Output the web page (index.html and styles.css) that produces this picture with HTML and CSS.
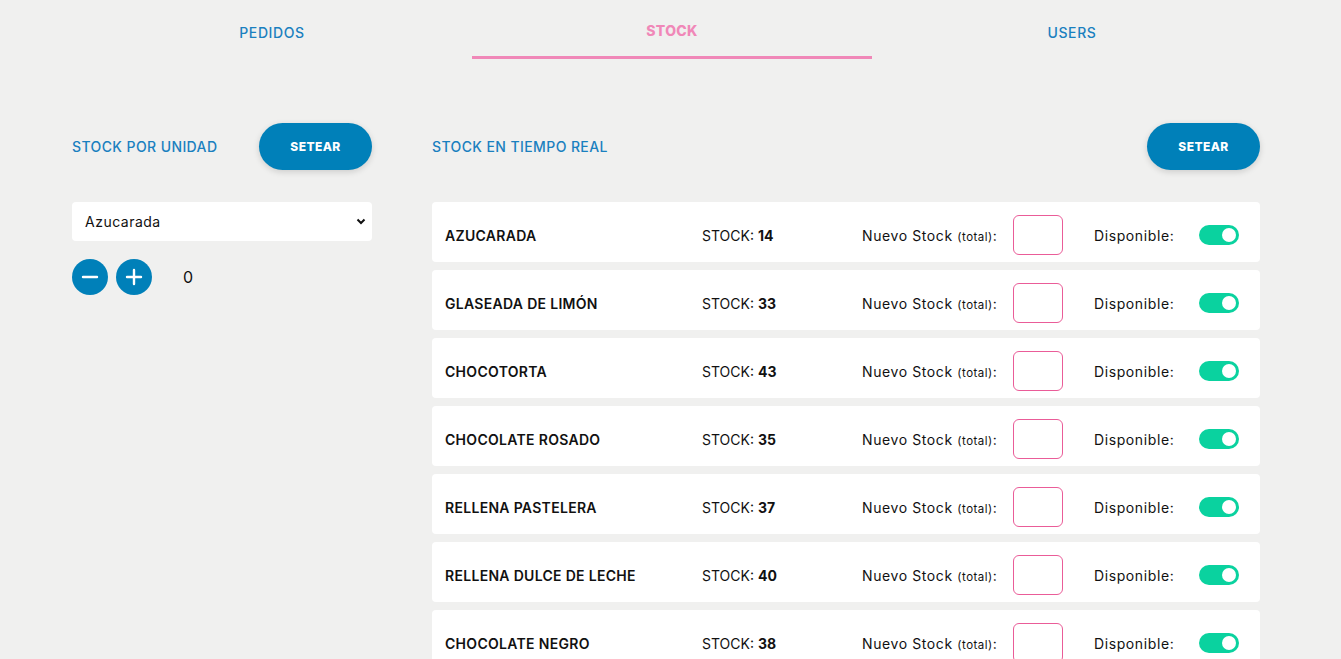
FILE: index.html
```html
<!DOCTYPE html>
<html lang="es">
<head>
<meta charset="utf-8">
<title>Stock</title>
<link rel="stylesheet" href="styles.css">
</head>
<body>
<div class="page">
  <nav class="tabs">
    <a class="tab">PEDIDOS</a>
    <a class="tab active">STOCK</a>
    <a class="tab">USERS</a>
  </nav>

  <div class="content">
    <section class="left">
      <div class="head">
        <h2 class="title">STOCK POR UNIDAD</h2>
        <button class="btn">SETEAR</button>
      </div>
      <div class="select">
        <span>Azucarada</span>
        <svg width="10" height="7" viewBox="0 0 10 7"><path d="M1.5 1.5 L5 5 L8.5 1.5" fill="none" stroke="#111" stroke-width="2"/></svg>
      </div>
      <div class="counter">
        <button class="circle"><svg width="18" height="18" viewBox="0 0 18 18"><path d="M2 9h14" stroke="#fff" stroke-width="2.4" stroke-linecap="round"/></svg></button>
        <button class="circle"><svg width="18" height="18" viewBox="0 0 18 18"><path d="M2 9h14M9 2v14" stroke="#fff" stroke-width="2.4" stroke-linecap="round"/></svg></button>
        <span class="count">0</span>
      </div>
    </section>

    <section class="right">
      <div class="head">
        <h2 class="title">STOCK EN TIEMPO REAL</h2>
        <button class="btn">SETEAR</button>
      </div>
      <div class="list">
        <div class="card"><span class="name">AZUCARADA</span><span class="stock">STOCK: <b>14</b></span><span class="nuevo">Nuevo Stock <small>(total)</small>:</span><span class="input"></span><span class="disp">Disponible:</span><span class="toggle"></span></div>
        <div class="card"><span class="name">GLASEADA DE LIMÓN</span><span class="stock">STOCK: <b>33</b></span><span class="nuevo">Nuevo Stock <small>(total)</small>:</span><span class="input"></span><span class="disp">Disponible:</span><span class="toggle"></span></div>
        <div class="card"><span class="name">CHOCOTORTA</span><span class="stock">STOCK: <b>43</b></span><span class="nuevo">Nuevo Stock <small>(total)</small>:</span><span class="input"></span><span class="disp">Disponible:</span><span class="toggle"></span></div>
        <div class="card"><span class="name">CHOCOLATE ROSADO</span><span class="stock">STOCK: <b>35</b></span><span class="nuevo">Nuevo Stock <small>(total)</small>:</span><span class="input"></span><span class="disp">Disponible:</span><span class="toggle"></span></div>
        <div class="card"><span class="name">RELLENA PASTELERA</span><span class="stock">STOCK: <b>37</b></span><span class="nuevo">Nuevo Stock <small>(total)</small>:</span><span class="input"></span><span class="disp">Disponible:</span><span class="toggle"></span></div>
        <div class="card"><span class="name">RELLENA DULCE DE LECHE</span><span class="stock">STOCK: <b>40</b></span><span class="nuevo">Nuevo Stock <small>(total)</small>:</span><span class="input"></span><span class="disp">Disponible:</span><span class="toggle"></span></div>
        <div class="card"><span class="name">CHOCOLATE NEGRO</span><span class="stock">STOCK: <b>38</b></span><span class="nuevo">Nuevo Stock <small>(total)</small>:</span><span class="input"></span><span class="disp">Disponible:</span><span class="toggle"></span></div>
      </div>
    </section>
  </div>
</div>
</body>
</html>
```
FILE: styles.css
```css
* { box-sizing: border-box; }
html, body { margin: 0; padding: 0; }
body {
  background: #f0f0ef;
  font-family: Inter, "Noto Sans", sans-serif;
  color: #111;
  overflow: hidden;
}
.page {
  padding-left: 72px;
  width: 1341px;
}
.tabs {
  display: grid;
  grid-template-columns: 400px 400px 400px;
  height: 59px;
}
.tab {
  display: flex;
  justify-content: center;
  padding-top: 24px;
  font-size: 14px;
  letter-spacing: 0.6px;
  color: #1a80bf;
  font-weight: 500;
}
.tab.active {
  color: #f088b8;
  font-weight: 800;
  padding-top: 22px;
  letter-spacing: 0.3px;
  border-bottom: 3px solid #f088b8;
}
.content {
  display: flex;
  gap: 60px;
  padding-top: 64px;
  width: 1188px;
}
.left { width: 300px; flex: none; }
.right { flex: 1; }
.head {
  display: flex;
  align-items: center;
  justify-content: space-between;
  height: 47px;
}
.title {
  margin: 0;
  font-size: 14px;
  font-weight: 500;
  letter-spacing: 0.4px;
  color: #1a80bf;
}
.btn {
  width: 113px;
  height: 47px;
  border: none;
  border-radius: 24px;
  background: #0080b9;
  color: #fff;
  font-family: Inter, sans-serif;
  font-weight: 800;
  font-size: 12px;
  letter-spacing: 0.4px;
  box-shadow: 0 2px 6px rgba(0,0,0,0.15);
  padding: 0;
}
.select {
  margin-top: 32px;
  height: 39px;
  background: #fff;
  border-radius: 4px;
  display: flex;
  align-items: center;
  justify-content: space-between;
  padding: 0 6px 0 13px;
  font-size: 14px;
  letter-spacing: 0.5px;
}
.counter {
  margin-top: 18px;
  display: flex;
  align-items: center;
  gap: 8px;
}
.circle {
  width: 36px;
  height: 36px;
  border-radius: 50%;
  border: none;
  background: #0080b9;
  display: flex;
  align-items: center;
  justify-content: center;
  padding: 0;
}
.count {
  margin-left: 23px;
  font-size: 16px;
}
.list {
  margin-top: 32px;
  display: flex;
  flex-direction: column;
  gap: 8px;
}
.card {
  height: 60px;
  background: #fff;
  border-radius: 4px;
  display: flex;
  align-items: center;
  padding: 6px 0 0 13px;
  font-size: 14px;
  letter-spacing: 0.6px;
}
.name { width: 257px; font-weight: 600; letter-spacing: 0.3px; }
.stock { width: 160px; letter-spacing: 0; }
.stock b { font-weight: 700; }
.nuevo { width: 151px; }
.nuevo small { font-size: 11.5px; letter-spacing: 0.5px; }
.input {
  width: 50px;
  height: 40px;
  border: 1px solid #ea5c98;
  border-radius: 6px;
  margin-top: -1px;
}
.disp { margin-left: 31px; width: 105px; }
.toggle {
  width: 40px;
  height: 20px;
  border-radius: 10px;
  background: #0ad29f;
  position: relative;
  margin-top: -1px;
}
.toggle::after {
  content: "";
  position: absolute;
  right: 3px;
  top: 3px;
  width: 14px;
  height: 14px;
  border-radius: 50%;
  background: #fff;
}
```
